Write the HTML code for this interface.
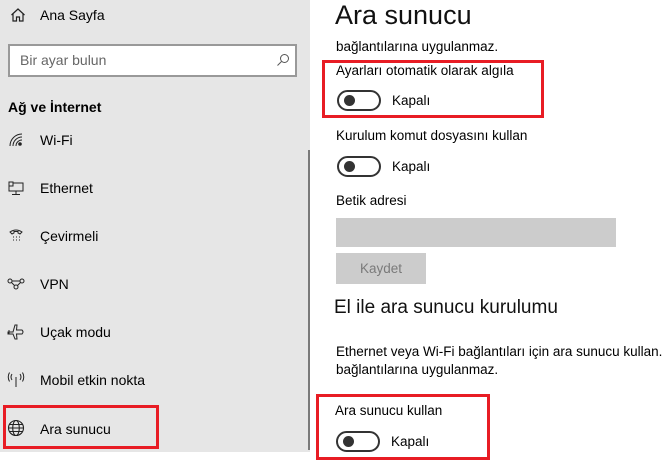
<!DOCTYPE html>
<html><head><meta charset="utf-8"><style>
body{margin:0;width:670px;height:465px;background:#fff;font-family:"Liberation Sans",sans-serif;color:#000;position:relative;overflow:hidden;font-size:13.5px}
.a{position:absolute;white-space:nowrap}
#side{position:absolute;left:0;top:0;width:310px;height:452px;background:#e6e6e6}
.t{line-height:16px}
.tog{position:absolute;width:40px;height:17px;border:2px solid #333;border-radius:11px}
.tog::after{content:"";position:absolute;left:5px;top:3px;width:11px;height:11px;border-radius:50%;background:#333}
.red{position:absolute;border:3px solid #e81c24;box-sizing:border-box}
svg{position:absolute}
</style></head><body>
<div id="side"></div>
<svg style="left:10px;top:7px" width="16" height="16" viewBox="0 0 16 16" fill="none" stroke="#222" stroke-width="1.2"><path d="M1.5 8 L8 2 L14.5 8 M3 6.5 V14 H6.5 V10 H9.5 V14 H13 V6.5"/></svg>
<div class="a t" style="left:40px;top:7px;font-size:14px">Ana Sayfa</div>
<div class="a" style="left:8px;top:44px;width:285px;height:29px;border:2px solid #999;background:#fff"></div>
<div class="a t" style="left:20px;top:52px;color:#666;font-size:14px">Bir ayar bulun</div>
<svg style="left:276px;top:53px" width="14" height="14" viewBox="0 0 14 14" fill="none" stroke="#555" stroke-width="1"><circle cx="8.5" cy="5.5" r="4"/><path d="M5.5 8.5 L1.5 12.5"/></svg>
<div class="a t" style="left:8px;top:99px;font-weight:bold;font-size:14px">Ağ ve İnternet</div>

<svg style="left:8px;top:132px" width="16" height="16" viewBox="0 0 16 16" fill="none" stroke="#222" stroke-width="1"><path d="M2 14 A12 12 0 0 1 14 2 M5 14 A9 9 0 0 1 14 5 M8 14 A6 6 0 0 1 14 8"/><circle cx="12" cy="12" r="1.3" fill="#222"/></svg>
<div class="a t" style="left:40px;top:132px;font-size:14px">Wi-Fi</div>
<svg style="left:8px;top:180px" width="16" height="16" viewBox="0 0 16 16" fill="none" stroke="#222" stroke-width="1"><rect x="1" y="2" width="4" height="4"/><path d="M5 3 H15 V11 H1 V6 M8 11 V14 M4 14.5 H12"/></svg>
<div class="a t" style="left:40px;top:180px;font-size:14px">Ethernet</div>
<svg style="left:8px;top:228px" width="16" height="16" viewBox="0 0 16 16" fill="none" stroke="#222" stroke-width="1"><path d="M2 4 Q8 0 14 4 L12 6 L10 5 V3.5 H6 V5 L4 6 Z"/><path d="M5 9h1M8 9h1M11 9h1M5 12h1M8 12h1M11 12h1"/></svg>
<div class="a t" style="left:40px;top:228px;font-size:14px">Çevirmeli</div>
<svg style="left:7px;top:277px" width="18" height="14" viewBox="0 0 18 14" fill="none" stroke="#222" stroke-width="1"><circle cx="3" cy="4" r="2"/><circle cx="15" cy="4" r="2"/><circle cx="9" cy="10" r="2"/><path d="M5 4 H13 M4.5 5.5 L7.5 8.5 M13.5 5.5 L10.5 8.5"/></svg>
<div class="a t" style="left:40px;top:276px;font-size:14px">VPN</div>
<svg style="left:7px;top:323px" width="18" height="18" viewBox="0 0 18 18" fill="none" stroke="#222" stroke-width="1"><path d="M1 9 H6 L8 2 H10 L9.5 7 H15 Q17 9 15 11 H9.5 L10 16 H8 L6 11 H1 Z M2 7 V11"/></svg>
<div class="a t" style="left:40px;top:324px;font-size:14px">Uçak modu</div>
<svg style="left:7px;top:372px" width="18" height="16" viewBox="0 0 18 16" fill="none" stroke="#222" stroke-width="1"><path d="M9 5 V15 M5 2 Q3 5 5 8 M13 2 Q15 5 13 8 M2.5 0.5 Q0 5 2.5 9.5 M15.5 0.5 Q18 5 15.5 9.5"/></svg>
<div class="a t" style="left:40px;top:372px;font-size:14px">Mobil etkin nokta</div>
<svg style="left:7px;top:419px" width="18" height="18" viewBox="0 0 18 18" fill="none" stroke="#222" stroke-width="1.1"><circle cx="9" cy="9" r="7.5"/><ellipse cx="9" cy="9" rx="3.3" ry="7.5"/><path d="M1.5 9 H16.5 M2.5 5.5 H15.5 M2.5 12.5 H15.5"/></svg>
<div class="a t" style="left:40px;top:421px;font-size:14px">Ara sunucu</div>
<div class="red" style="left:3px;top:405px;width:156px;height:44px"></div>
<div class="a" style="left:308px;top:150px;width:2px;height:300px;background:#7a7a7a"></div>

<div class="a" style="left:335px;top:-2px;font-size:27px;line-height:34px;color:#111">Ara sunucu</div>
<div class="a t" style="left:336px;top:39px">bağlantılarına uygulanmaz.</div>
<div class="red" style="left:322px;top:60px;width:222px;height:58px"></div>
<div class="a t" style="left:336px;top:63px">Ayarları otomatik olarak algıla</div>
<div class="tog" style="left:337px;top:90px"></div>
<div class="a t" style="left:392px;top:93px">Kapalı</div>
<div class="a t" style="left:336px;top:128px">Kurulum komut dosyasını kullan</div>
<div class="tog" style="left:337px;top:156px"></div>
<div class="a t" style="left:392px;top:159px">Kapalı</div>
<div class="a t" style="left:336px;top:193px">Betik adresi</div>
<div class="a" style="left:336px;top:218px;width:280px;height:29px;background:#ccc"></div>
<div class="a" style="left:336px;top:253px;width:90px;height:31px;background:#ccc;color:#7a7a7a;text-align:center;line-height:31px">Kaydet</div>
<div class="a" style="left:334px;top:297px;font-size:19px;line-height:22px;color:#111">El ile ara sunucu kurulumu</div>
<div class="a t" style="left:336px;top:344px">Ethernet veya Wi-Fi bağlantıları için ara sunucu kullan.</div>
<div class="a t" style="left:336px;top:362px">bağlantılarına uygulanmaz.</div>
<div class="red" style="left:316px;top:394px;width:174px;height:66px"></div>
<div class="a t" style="left:335px;top:403px">Ara sunucu kullan</div>
<div class="tog" style="left:336px;top:431px"></div>
<div class="a t" style="left:391px;top:434px">Kapalı</div>
</body></html>
